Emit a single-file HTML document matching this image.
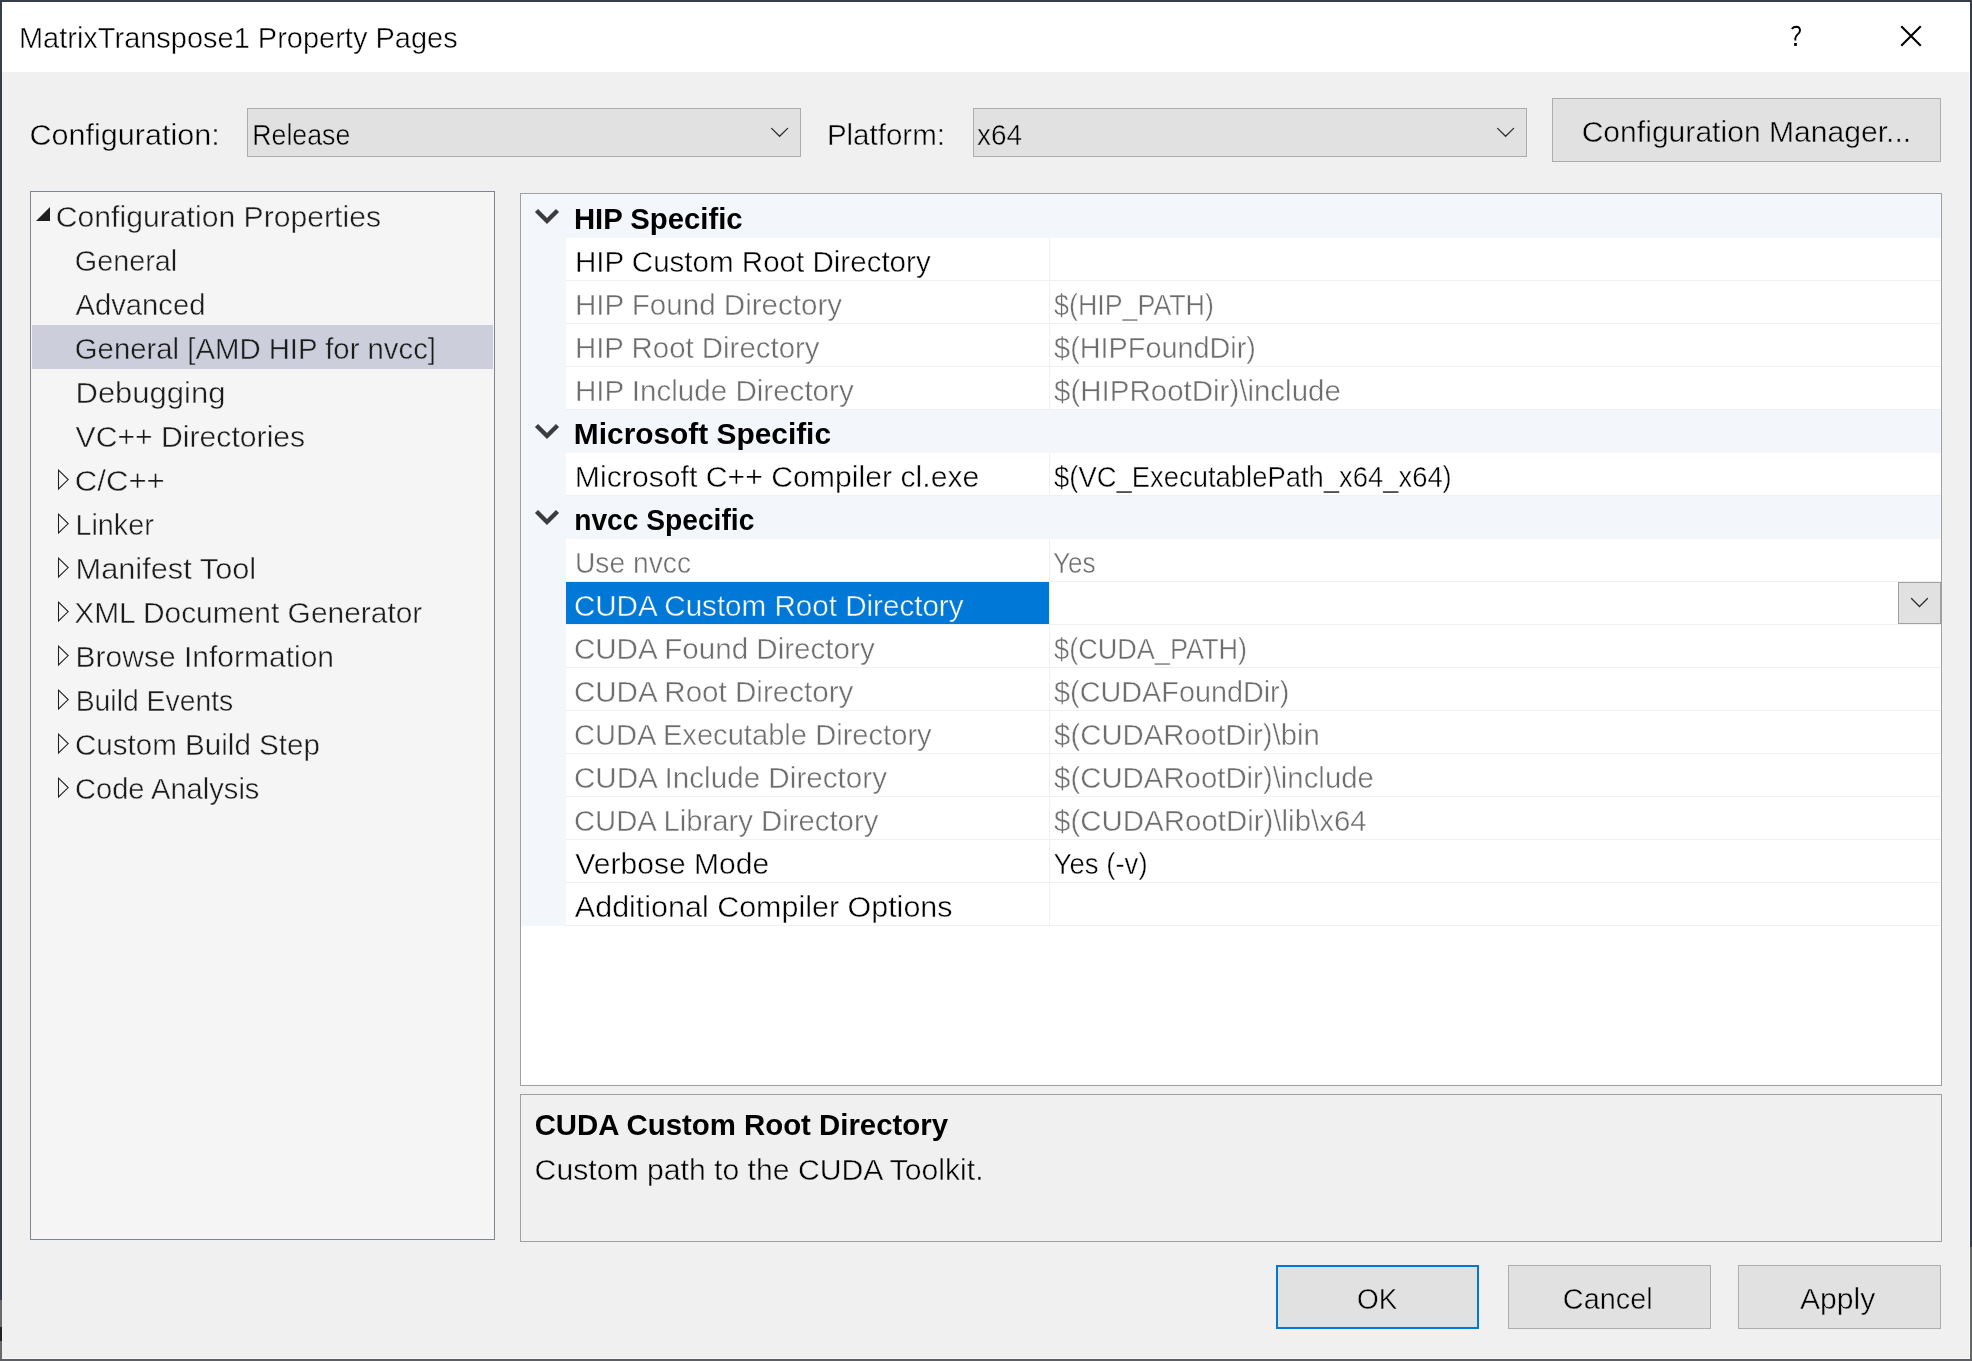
<!DOCTYPE html>
<html><head><meta charset="utf-8"><style>
html,body{margin:0;padding:0;width:1972px;height:1361px;overflow:hidden;background:#f0f0f0}
svg{display:block;will-change:transform}
text{font-family:"Liberation Sans",sans-serif;font-size:30px;white-space:pre}
</style></head><body>
<svg width="1972" height="1361" viewBox="0 0 1972 1361">
<g shape-rendering="crispEdges">
<rect x="0" y="0" width="1972" height="1361" fill="#363d4b"/>
<rect x="1970" y="1247" width="2" height="114" fill="#656766"/>
<rect x="0" y="1300" width="2" height="61" fill="#6a6a6a"/>
<rect x="0" y="1327" width="2" height="14" fill="#222222"/>
<rect x="0" y="1359" width="1972" height="2" fill="#5c5e64"/>
<rect x="2" y="2" width="1968" height="1357" fill="#f8f8f8"/>
<rect x="2" y="2" width="1967" height="1356" fill="#f0f0f0"/>
<rect x="2" y="2" width="1968" height="70" fill="#ffffff"/>
<rect x="247" y="108" width="554" height="49" fill="#adadad"/>
<rect x="248" y="109" width="552" height="47" fill="#e1e1e1"/>
<rect x="973" y="108" width="554" height="49" fill="#adadad"/>
<rect x="974" y="109" width="552" height="47" fill="#e1e1e1"/>
<rect x="1552" y="98" width="389" height="64" fill="#adadad"/>
<rect x="1553" y="99" width="387" height="62" fill="#e1e1e1"/>
<rect x="30" y="191" width="465" height="1049" fill="#7f848d"/>
<rect x="31" y="192" width="463" height="1047" fill="#f5f5f5"/>
<rect x="32" y="325" width="461" height="44" fill="#cccedb"/>
<rect x="520" y="193" width="1422" height="893" fill="#a0a0a0"/>
<rect x="521" y="194" width="1420" height="891" fill="#ffffff"/>
<rect x="521" y="194" width="1420" height="732" fill="#f3f6fb"/>
<rect x="566" y="238" width="1375" height="42" fill="#ffffff"/>
<rect x="566" y="280" width="1375" height="1" fill="#eff0f3"/>
<rect x="1049" y="238" width="1" height="42" fill="#eff0f3"/>
<rect x="566" y="281" width="1375" height="42" fill="#ffffff"/>
<rect x="566" y="323" width="1375" height="1" fill="#eff0f3"/>
<rect x="1049" y="281" width="1" height="42" fill="#eff0f3"/>
<rect x="566" y="324" width="1375" height="42" fill="#ffffff"/>
<rect x="566" y="366" width="1375" height="1" fill="#eff0f3"/>
<rect x="1049" y="324" width="1" height="42" fill="#eff0f3"/>
<rect x="566" y="367" width="1375" height="42" fill="#ffffff"/>
<rect x="566" y="409" width="1375" height="1" fill="#eff0f3"/>
<rect x="1049" y="367" width="1" height="42" fill="#eff0f3"/>
<rect x="566" y="453" width="1375" height="42" fill="#ffffff"/>
<rect x="566" y="495" width="1375" height="1" fill="#eff0f3"/>
<rect x="1049" y="453" width="1" height="42" fill="#eff0f3"/>
<rect x="566" y="539" width="1375" height="42" fill="#ffffff"/>
<rect x="566" y="581" width="1375" height="1" fill="#eff0f3"/>
<rect x="1049" y="539" width="1" height="42" fill="#eff0f3"/>
<rect x="566" y="582" width="1375" height="42" fill="#ffffff"/>
<rect x="566" y="624" width="1375" height="1" fill="#eff0f3"/>
<rect x="1049" y="582" width="1" height="42" fill="#eff0f3"/>
<rect x="566" y="582" width="483" height="42" fill="#0078d7"/>
<rect x="1898" y="582" width="43" height="42" fill="#a0a0a0"/>
<rect x="1899" y="583" width="41" height="40" fill="#e1e1e1"/>
<rect x="566" y="625" width="1375" height="42" fill="#ffffff"/>
<rect x="566" y="667" width="1375" height="1" fill="#eff0f3"/>
<rect x="1049" y="625" width="1" height="42" fill="#eff0f3"/>
<rect x="566" y="668" width="1375" height="42" fill="#ffffff"/>
<rect x="566" y="710" width="1375" height="1" fill="#eff0f3"/>
<rect x="1049" y="668" width="1" height="42" fill="#eff0f3"/>
<rect x="566" y="711" width="1375" height="42" fill="#ffffff"/>
<rect x="566" y="753" width="1375" height="1" fill="#eff0f3"/>
<rect x="1049" y="711" width="1" height="42" fill="#eff0f3"/>
<rect x="566" y="754" width="1375" height="42" fill="#ffffff"/>
<rect x="566" y="796" width="1375" height="1" fill="#eff0f3"/>
<rect x="1049" y="754" width="1" height="42" fill="#eff0f3"/>
<rect x="566" y="797" width="1375" height="42" fill="#ffffff"/>
<rect x="566" y="839" width="1375" height="1" fill="#eff0f3"/>
<rect x="1049" y="797" width="1" height="42" fill="#eff0f3"/>
<rect x="566" y="840" width="1375" height="42" fill="#ffffff"/>
<rect x="566" y="882" width="1375" height="1" fill="#eff0f3"/>
<rect x="1049" y="840" width="1" height="42" fill="#eff0f3"/>
<rect x="566" y="883" width="1375" height="42" fill="#ffffff"/>
<rect x="566" y="925" width="1375" height="1" fill="#eff0f3"/>
<rect x="1049" y="883" width="1" height="42" fill="#eff0f3"/>
<rect x="520" y="1094" width="1422" height="148" fill="#a0a0a0"/>
<rect x="521" y="1095" width="1420" height="146" fill="#f0f0f0"/>
<rect x="1276" y="1265" width="203" height="64" fill="#0078d7"/>
<rect x="1278" y="1267" width="199" height="60" fill="#e1e1e1"/>
<rect x="1508" y="1265" width="203" height="64" fill="#adadad"/>
<rect x="1509" y="1266" width="201" height="62" fill="#e1e1e1"/>
<rect x="1738" y="1265" width="203" height="64" fill="#adadad"/>
<rect x="1739" y="1266" width="201" height="62" fill="#e1e1e1"/>
</g>
<path d="M1791.8 28.9 C1793 27.4 1794.8 26.8 1796.4 26.8 C1798.6 26.9 1800 28.4 1800 30.5 C1800 32.4 1798.7 33.6 1797.2 34.9 C1795.9 36.1 1795.3 37 1795.3 38.6 L1795.3 40.4" stroke="#000" stroke-width="1.9" fill="none"/><rect x="1794.1" y="43" width="2.8" height="2.9" fill="#000"/>
<path d="M1902.0 26.9 L1920.0 44.9 M1920.0 26.9 L1902.0 44.9" stroke="#000" stroke-width="2.1" stroke-linecap="square" fill="none"/>
<path d="M771.6 128.4 L779.6 136.3 L787.6 128.4" stroke="#2e2e2e" stroke-width="1.3" fill="none" stroke-linecap="round"/>
<path d="M1497.6 128.4 L1505.6 136.3 L1513.6 128.4" stroke="#2e2e2e" stroke-width="1.3" fill="none" stroke-linecap="round"/>
<path d="M1911.5 598.5 L1919.5 606.5 L1927.5 598.5" stroke="#2e2e2e" stroke-width="1.3" fill="none" stroke-linecap="round"/>
<path d="M536.5 210.5 L547 221 L557.5 210.5" stroke="#3c3c3f" stroke-width="4.4" fill="none" stroke-linejoin="miter"/>
<path d="M536.5 425.5 L547 436 L557.5 425.5" stroke="#3c3c3f" stroke-width="4.4" fill="none" stroke-linejoin="miter"/>
<path d="M536.5 511.5 L547 522 L557.5 511.5" stroke="#3c3c3f" stroke-width="4.4" fill="none" stroke-linejoin="miter"/>
<path d="M36 221 L50 207 L50 221 Z" fill="#1e1e1e"/>
<path d="M58.5 470.2 L68.2 479.6 L58.5 489.0 Z" fill="none" stroke="#1e1e1e" stroke-width="1.05"/>
<path d="M58.5 514.2 L68.2 523.6 L58.5 533.0 Z" fill="none" stroke="#1e1e1e" stroke-width="1.05"/>
<path d="M58.5 558.2 L68.2 567.6 L58.5 577.0 Z" fill="none" stroke="#1e1e1e" stroke-width="1.05"/>
<path d="M58.5 602.2 L68.2 611.6 L58.5 621.0 Z" fill="none" stroke="#1e1e1e" stroke-width="1.05"/>
<path d="M58.5 646.2 L68.2 655.6 L58.5 665.0 Z" fill="none" stroke="#1e1e1e" stroke-width="1.05"/>
<path d="M58.5 690.2 L68.2 699.6 L58.5 709.0 Z" fill="none" stroke="#1e1e1e" stroke-width="1.05"/>
<path d="M58.5 734.2 L68.2 743.6 L58.5 753.0 Z" fill="none" stroke="#1e1e1e" stroke-width="1.05"/>
<path d="M58.5 778.2 L68.2 787.6 L58.5 797.0 Z" fill="none" stroke="#1e1e1e" stroke-width="1.05"/>
<text x="18.97" y="48.30" textLength="438.66" lengthAdjust="spacingAndGlyphs" fill="#000000" stroke="#ffffff" stroke-width="0.45">MatrixTranspose1 Property Pages</text>
<text x="29.56" y="145.20" textLength="190.18" lengthAdjust="spacingAndGlyphs" fill="#000000" stroke="#f0f0f0" stroke-width="0.45">Configuration:</text>
<text x="252.22" y="145.00" textLength="98.07" lengthAdjust="spacingAndGlyphs" fill="#000000" stroke="#e1e1e1" stroke-width="0.45">Release</text>
<text x="826.89" y="145.00" textLength="118.08" lengthAdjust="spacingAndGlyphs" fill="#000000" stroke="#f0f0f0" stroke-width="0.45">Platform:</text>
<text x="977.10" y="145.00" textLength="45.03" lengthAdjust="spacingAndGlyphs" fill="#000000" stroke="#e1e1e1" stroke-width="0.45">x64</text>
<text x="1581.65" y="141.80" textLength="329.55" lengthAdjust="spacingAndGlyphs" fill="#000000" stroke="#e1e1e1" stroke-width="0.45">Configuration Manager...</text>
<text x="55.81" y="227.00" textLength="325.19" lengthAdjust="spacingAndGlyphs" fill="#1b1b1b" stroke="#f5f5f5" stroke-width="0.45">Configuration Properties</text>
<text x="74.82" y="271.00" textLength="102.46" lengthAdjust="spacingAndGlyphs" fill="#1b1b1b" stroke="#f5f5f5" stroke-width="0.45">General</text>
<text x="75.38" y="315.00" textLength="130.09" lengthAdjust="spacingAndGlyphs" fill="#1b1b1b" stroke="#f5f5f5" stroke-width="0.45">Advanced</text>
<text x="74.80" y="359.00" textLength="361.20" lengthAdjust="spacingAndGlyphs" fill="#1b1b1b" stroke="#cccedb" stroke-width="0.45">General [AMD HIP for nvcc]</text>
<text x="75.51" y="403.00" textLength="149.91" lengthAdjust="spacingAndGlyphs" fill="#1b1b1b" stroke="#f5f5f5" stroke-width="0.45">Debugging</text>
<text x="75.58" y="447.00" textLength="229.62" lengthAdjust="spacingAndGlyphs" fill="#1b1b1b" stroke="#f5f5f5" stroke-width="0.45">VC++ Directories</text>
<text x="74.84" y="491.00" textLength="89.91" lengthAdjust="spacingAndGlyphs" fill="#1b1b1b" stroke="#f5f5f5" stroke-width="0.45">C/C++</text>
<text x="75.45" y="535.00" textLength="78.39" lengthAdjust="spacingAndGlyphs" fill="#1b1b1b" stroke="#f5f5f5" stroke-width="0.45">Linker</text>
<text x="75.54" y="579.00" textLength="180.68" lengthAdjust="spacingAndGlyphs" fill="#1b1b1b" stroke="#f5f5f5" stroke-width="0.45">Manifest Tool</text>
<text x="74.18" y="623.00" textLength="348.17" lengthAdjust="spacingAndGlyphs" fill="#1b1b1b" stroke="#f5f5f5" stroke-width="0.45">XML Document Generator</text>
<text x="75.58" y="667.00" textLength="258.44" lengthAdjust="spacingAndGlyphs" fill="#1b1b1b" stroke="#f5f5f5" stroke-width="0.45">Browse Information</text>
<text x="75.69" y="711.00" textLength="157.57" lengthAdjust="spacingAndGlyphs" fill="#1b1b1b" stroke="#f5f5f5" stroke-width="0.45">Build Events</text>
<text x="74.89" y="755.00" textLength="245.14" lengthAdjust="spacingAndGlyphs" fill="#1b1b1b" stroke="#f5f5f5" stroke-width="0.45">Custom Build Step</text>
<text x="74.92" y="799.00" textLength="184.53" lengthAdjust="spacingAndGlyphs" fill="#1b1b1b" stroke="#f5f5f5" stroke-width="0.45">Code Analysis</text>
<text x="573.91" y="229.00" textLength="168.75" lengthAdjust="spacingAndGlyphs" fill="#000000" font-weight="bold">HIP Specific</text>
<text x="574.89" y="272.00" textLength="355.79" lengthAdjust="spacingAndGlyphs" fill="#000000" stroke="#ffffff" stroke-width="0.45">HIP Custom Root Directory</text>
<text x="574.89" y="315.00" textLength="267.13" lengthAdjust="spacingAndGlyphs" fill="#6d6d6d" stroke="#ffffff" stroke-width="0.45">HIP Found Directory</text>
<text x="1054.11" y="315.00" textLength="159.79" lengthAdjust="spacingAndGlyphs" fill="#6d6d6d" stroke="#ffffff" stroke-width="0.45">$(HIP_PATH)</text>
<text x="574.90" y="358.00" textLength="244.61" lengthAdjust="spacingAndGlyphs" fill="#6d6d6d" stroke="#ffffff" stroke-width="0.45">HIP Root Directory</text>
<text x="1054.11" y="358.00" textLength="201.86" lengthAdjust="spacingAndGlyphs" fill="#6d6d6d" stroke="#ffffff" stroke-width="0.45">$(HIPFoundDir)</text>
<text x="574.89" y="401.00" textLength="278.79" lengthAdjust="spacingAndGlyphs" fill="#6d6d6d" stroke="#ffffff" stroke-width="0.45">HIP Include Directory</text>
<text x="1054.11" y="401.00" textLength="286.75" lengthAdjust="spacingAndGlyphs" fill="#6d6d6d" stroke="#ffffff" stroke-width="0.45">$(HIPRootDir)\include</text>
<text x="573.87" y="444.00" textLength="257.17" lengthAdjust="spacingAndGlyphs" fill="#000000" font-weight="bold">Microsoft Specific</text>
<text x="574.85" y="487.00" textLength="404.54" lengthAdjust="spacingAndGlyphs" fill="#000000" stroke="#ffffff" stroke-width="0.45">Microsoft C++ Compiler cl.exe</text>
<text x="1054.11" y="487.00" textLength="397.64" lengthAdjust="spacingAndGlyphs" fill="#000000" stroke="#ffffff" stroke-width="0.45">$(VC_ExecutablePath_x64_x64)</text>
<text x="574.22" y="530.00" textLength="180.10" lengthAdjust="spacingAndGlyphs" fill="#000000" font-weight="bold">nvcc Specific</text>
<text x="574.98" y="573.00" textLength="116.06" lengthAdjust="spacingAndGlyphs" fill="#6d6d6d" stroke="#ffffff" stroke-width="0.45">Use nvcc</text>
<text x="1052.91" y="573.00" textLength="42.64" lengthAdjust="spacingAndGlyphs" fill="#6d6d6d" stroke="#ffffff" stroke-width="0.45">Yes</text>
<text x="573.88" y="616.00" textLength="389.63" lengthAdjust="spacingAndGlyphs" fill="#ffffff" stroke="#0078d7" stroke-width="0.45">CUDA Custom Root Directory</text>
<text x="573.88" y="659.00" textLength="300.80" lengthAdjust="spacingAndGlyphs" fill="#6d6d6d" stroke="#ffffff" stroke-width="0.45">CUDA Found Directory</text>
<text x="1054.11" y="659.00" textLength="192.97" lengthAdjust="spacingAndGlyphs" fill="#6d6d6d" stroke="#ffffff" stroke-width="0.45">$(CUDA_PATH)</text>
<text x="573.88" y="702.00" textLength="279.48" lengthAdjust="spacingAndGlyphs" fill="#6d6d6d" stroke="#ffffff" stroke-width="0.45">CUDA Root Directory</text>
<text x="1054.11" y="702.00" textLength="235.20" lengthAdjust="spacingAndGlyphs" fill="#6d6d6d" stroke="#ffffff" stroke-width="0.45">$(CUDAFoundDir)</text>
<text x="573.89" y="745.00" textLength="357.79" lengthAdjust="spacingAndGlyphs" fill="#6d6d6d" stroke="#ffffff" stroke-width="0.45">CUDA Executable Directory</text>
<text x="1054.11" y="745.00" textLength="265.73" lengthAdjust="spacingAndGlyphs" fill="#6d6d6d" stroke="#ffffff" stroke-width="0.45">$(CUDARootDir)\bin</text>
<text x="573.88" y="788.00" textLength="313.14" lengthAdjust="spacingAndGlyphs" fill="#6d6d6d" stroke="#ffffff" stroke-width="0.45">CUDA Include Directory</text>
<text x="1054.11" y="788.00" textLength="319.75" lengthAdjust="spacingAndGlyphs" fill="#6d6d6d" stroke="#ffffff" stroke-width="0.45">$(CUDARootDir)\include</text>
<text x="573.89" y="831.00" textLength="304.45" lengthAdjust="spacingAndGlyphs" fill="#6d6d6d" stroke="#ffffff" stroke-width="0.45">CUDA Library Directory</text>
<text x="1054.11" y="831.00" textLength="312.58" lengthAdjust="spacingAndGlyphs" fill="#6d6d6d" stroke="#ffffff" stroke-width="0.45">$(CUDARootDir)\lib\x64</text>
<text x="575.36" y="874.00" textLength="193.86" lengthAdjust="spacingAndGlyphs" fill="#000000" stroke="#ffffff" stroke-width="0.45">Verbose Mode</text>
<text x="1053.61" y="874.00" textLength="93.98" lengthAdjust="spacingAndGlyphs" fill="#000000" stroke="#ffffff" stroke-width="0.45">Yes (-v)</text>
<text x="574.86" y="917.00" textLength="377.65" lengthAdjust="spacingAndGlyphs" fill="#000000" stroke="#ffffff" stroke-width="0.45">Additional Compiler Options</text>
<text x="534.64" y="1134.50" textLength="413.41" lengthAdjust="spacingAndGlyphs" fill="#000000" font-weight="bold">CUDA Custom Root Directory</text>
<text x="534.62" y="1180.20" textLength="448.91" lengthAdjust="spacingAndGlyphs" fill="#000000" stroke="#f0f0f0" stroke-width="0.45">Custom path to the CUDA Toolkit.</text>
<text x="1357.00" y="1309.00" textLength="40.35" lengthAdjust="spacingAndGlyphs" fill="#000000" stroke="#e1e1e1" stroke-width="0.45">OK</text>
<text x="1562.85" y="1309.00" textLength="89.77" lengthAdjust="spacingAndGlyphs" fill="#000000" stroke="#e1e1e1" stroke-width="0.45">Cancel</text>
<text x="1799.98" y="1309.00" textLength="75.38" lengthAdjust="spacingAndGlyphs" fill="#000000" stroke="#e1e1e1" stroke-width="0.45">Apply</text>
</svg>
</body></html>
